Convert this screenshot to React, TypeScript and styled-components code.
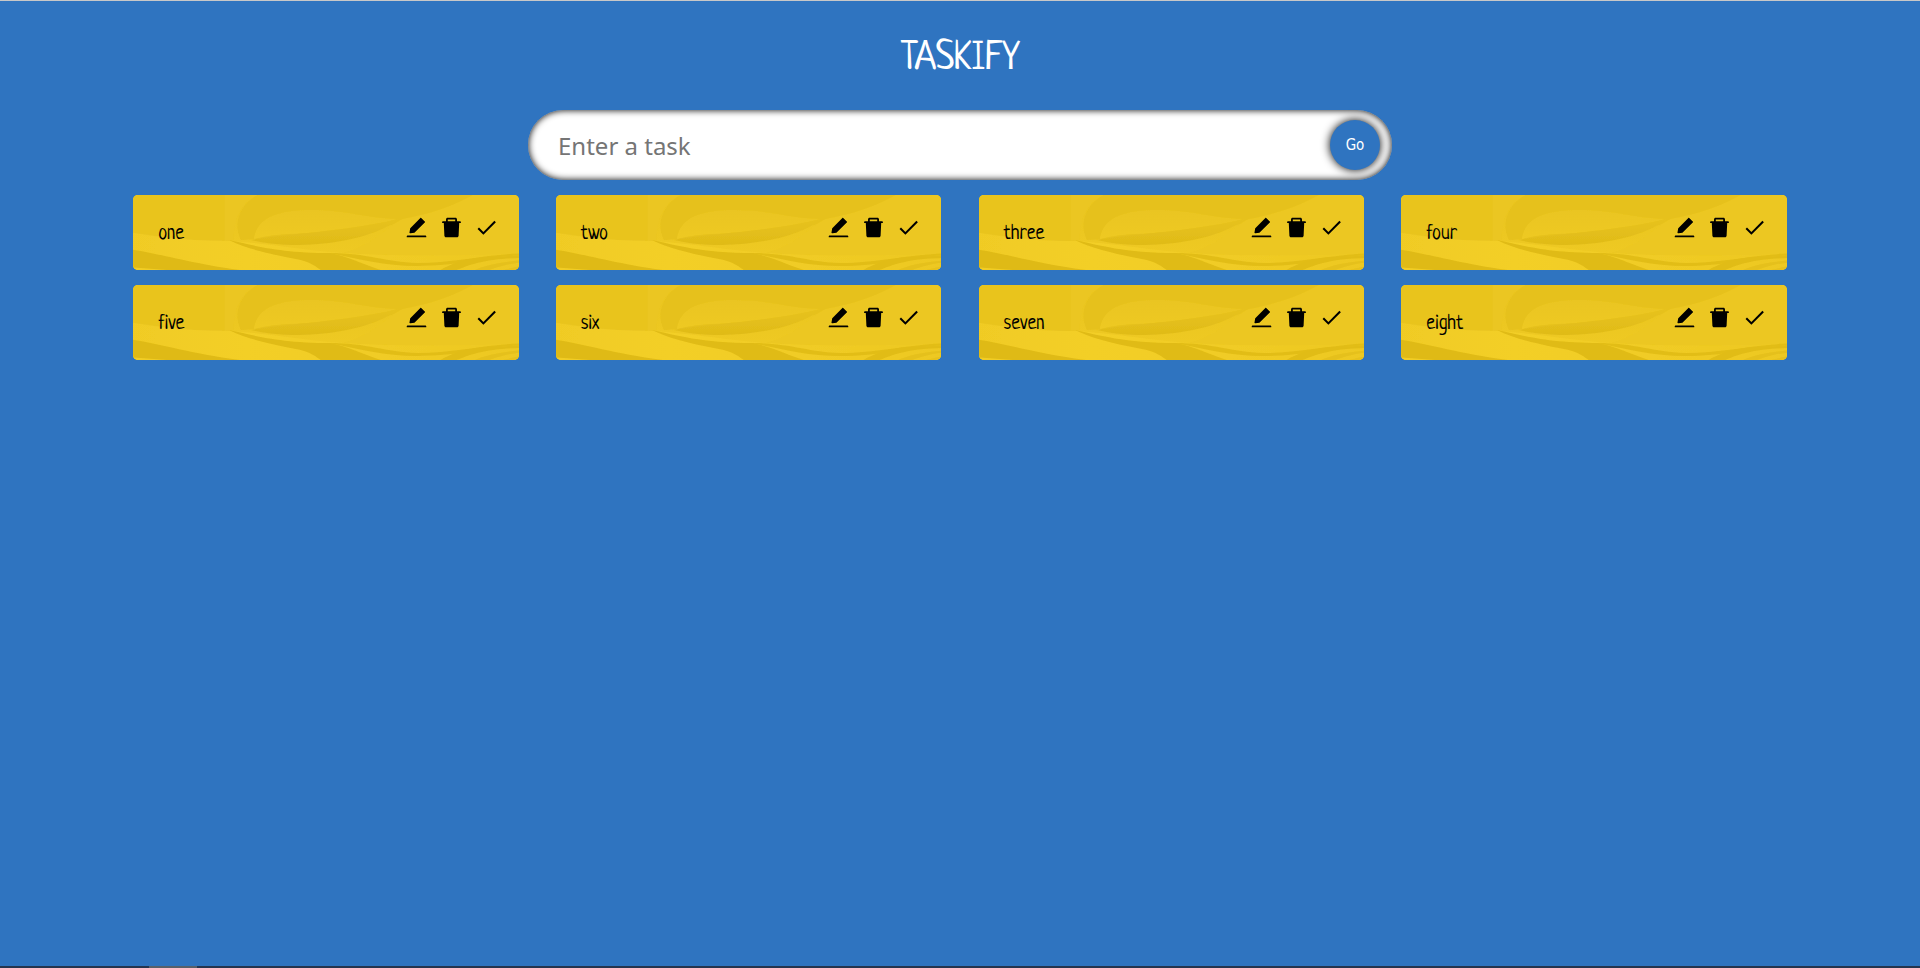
import React, { useState } from "react";
import styled, { createGlobalStyle } from "styled-components";
import { AiFillDelete, AiFillEdit } from "react-icons/ai";
import { MdDone } from "react-icons/md";

const GlobalStyle = createGlobalStyle`
  * {
    box-sizing: border-box;
  }
  body {
    margin: 0;
    background: #2f74c0;
  }
`;

const Page = styled.div`
  display: flex;
  flex-direction: column;
  align-items: center;
  min-height: 100vh;
  border-top: 1px solid #c8c8c8;
  font-family: "Neucha", "Roboto Condensed", sans-serif;
`;

const Heading = styled.h1`
  margin: 34px 0 26px;
  color: #fff;
  font-size: 40px;
  font-weight: 400;
  line-height: 49px;
  text-transform: uppercase;
`;

const TaskForm = styled.form`
  position: relative;
  display: flex;
  align-items: center;
  width: 45%;
`;

const TaskInput = styled.input`
  width: 100%;
  height: 70px;
  padding: 0 80px 0 30px;
  border: 0;
  border-radius: 50px;
  background: #fff;
  box-shadow: inset 0 0 7px #000;
  font-family: "Noto Sans", sans-serif;
  font-size: 24px;
  outline: 0;

  &::placeholder {
    color: #757575;
    opacity: 1;
  }
`;

const SubmitButton = styled.button`
  position: absolute;
  right: 12px;
  width: 50px;
  height: 50px;
  padding: 0;
  border: 0;
  border-radius: 50%;
  background: #2f74c0;
  color: #fff;
  box-shadow: 0 0 10px #000;
  font-family: "DejaVu Sans Condensed", "Noto Sans", sans-serif;
  font-size: 15px;
`;

const TaskList = styled.ul`
  display: flex;
  flex-wrap: wrap;
  justify-content: space-evenly;
  width: 90%;
  margin: 0;
  padding: 0;
  list-style: none;
`;

const Card = styled.li`
  position: relative;
  display: flex;
  box-sizing: content-box;
  width: 20%;
  height: 35px;
  margin-top: 15px;
  padding: 20px;
  border-radius: 5px;
  background: #ebc620;
  overflow: hidden;
  isolation: isolate;
`;

const CardArt = styled.svg`
  position: absolute;
  inset: 0;
  z-index: -1;
  width: 100%;
  height: 100%;
`;

const TaskName = styled.span`
  flex: 1;
  padding: 5px;
  font-size: 20px;
  line-height: 30px;
`;

const Actions = styled.div`
  display: flex;
  align-items: flex-start;
  gap: 10px;
`;

const IconButton = styled.button`
  display: flex;
  padding: 0;
  border: 0;
  background: none;
  color: #000;
  font-size: 25px;
  cursor: pointer;
`;

const BottomEdge = styled.footer`
  width: 100%;
  height: 2px;
  margin-top: auto;
  background: linear-gradient(#57606b, #57606b) 149px 0 / 48px 2px no-repeat #25354f;
`;

const Waves = () => (
  <CardArt viewBox="0 0 386 75" preserveAspectRatio="none" aria-hidden="true">
    <defs>
      <linearGradient id="sheen" x1="0" y1="0" x2="0" y2="1">
        <stop offset="0" stopColor="#e8c31e" />
        <stop offset="1" stopColor="#f0cb24" />
      </linearGradient>
      <linearGradient id="lens" x1="0" y1="0" x2="0" y2="1">
        <stop offset="0" stopColor="#eac520" />
        <stop offset="1" stopColor="#eec922" />
      </linearGradient>
      <linearGradient id="shade" x1="0" y1="0" x2="0" y2="1">
        <stop offset="0" stopColor="#e7c21d" />
        <stop offset="1" stopColor="#e0bb18" />
      </linearGradient>
      <linearGradient id="band" x1="0" y1="0" x2="1" y2="0">
        <stop offset="0" stopColor="#f0cb24" />
        <stop offset="0.3" stopColor="#f3cf28" />
        <stop offset="1" stopColor="#edc822" />
      </linearGradient>
      <filter id="soften" x="0" y="0" width="1" height="1">
        <feGaussianBlur stdDeviation="0.6" />
      </filter>
    </defs>
    <rect width="386" height="75" fill="url(#sheen)" />
    <g filter="url(#soften)">
      <path d="M-5 -5H92V46C55 46 25 41 -5 37Z" fill="#e9c41e" />
      <path d="M92 -5H125V0C106 10 101 26 101 45L92 46Z" fill="#ebc620" />
      <path d="M125 -5H340V0C315 15 285 24 258 30C228 36 160 42 108 45C100 30 106 10 125 0Z" fill="#e6c11c" />
      <path d="M340 -5H392V60C340 60 270 62 210 58C245 48 255 30 270 24C300 18 318 12 340 0Z" fill="#ecc721" />
      <path d="M121 44C124 22 146 15 178 15C215 15 232 23 264 24C240 32 190 38 154 39C138 40 130 42 121 44Z" fill="url(#lens)" />
      <path d="M118 45C145 39 205 38 266 24C247 39 212 49 166 50C146 50 130 48 118 45Z" fill="url(#shade)" />
      <path d="M-5 37C32 44 65 46 96 46C140 49 170 55 210 58C250 61 330 62 392 58V80H-5Z" fill="url(#band)" />
      <path d="M-5 54C30 59 55 68 107 75V80H-5Z" fill="#dfba16" />
      <path d="M-5 72L34 75V80H-5Z" fill="#f1cd26" />
      <path d="M96 45C120 50 145 58 198 58C222 64 232 70 248 75V80H195L188 75C180 69 174 66 163 64C132 58 112 53 96 45Z" fill="#e0bb16" />
      <path d="M196 58C235 58 252 67 285 68C320 68 350 60 392 58V60C350 62 328 71 284 71C252 71 226 64 196 58Z" fill="#e2bd18" />
      <path d="M306 76C320 68 334 62 362 62L392 60V63C356 63 338 69 322 76Z" fill="#e1bc17" />
      <path d="M340 76C355 69 370 67 392 65V67C372 69 362 73 354 76Z" fill="#e5c01b" />
      <path d="M366 76L392 70V76Z" fill="#e6c11c" />
    </g>
  </CardArt>
);

const initialTasks = ["one", "two", "three", "four", "five", "six", "seven", "eight"];

export default function App() {
  const [tasks, setTasks] = useState(initialTasks);
  const [draft, setDraft] = useState("");

  const addTask = (event: React.FormEvent) => {
    event.preventDefault();
    if (draft.trim()) {
      setTasks([...tasks, draft.trim()]);
      setDraft("");
    }
  };

  const removeTask = (index: number) => setTasks(tasks.filter((_, i) => i !== index));

  return (
    <>
      <GlobalStyle />
      <Page>
        <Heading>Taskify</Heading>
        <TaskForm onSubmit={addTask}>
          <TaskInput
            type="text"
            placeholder="Enter a task"
            aria-label="Enter a task"
            value={draft}
            onChange={(event) => setDraft(event.target.value)}
          />
          <SubmitButton type="submit">Go</SubmitButton>
        </TaskForm>
        <TaskList>
          {tasks.map((task, index) => (
            <Card key={index}>
              <Waves />
              <TaskName>{task}</TaskName>
              <Actions>
                <IconButton type="button" aria-label="Edit">
                  <AiFillEdit />
                </IconButton>
                <IconButton type="button" aria-label="Delete" onClick={() => removeTask(index)}>
                  <AiFillDelete />
                </IconButton>
                <IconButton type="button" aria-label="Done">
                  <MdDone />
                </IconButton>
              </Actions>
            </Card>
          ))}
        </TaskList>
        <BottomEdge />
      </Page>
    </>
  );
}
